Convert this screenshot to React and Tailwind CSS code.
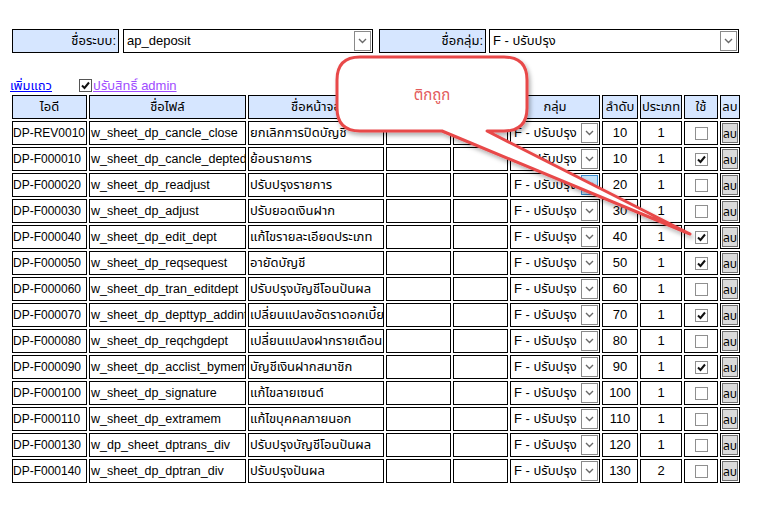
import React from "react";

const rows = [
  ["DP-REV0010", "w_sheet_dp_cancle_close", "ยกเลิกการปิดบัญชี", "10", "1", false],
  ["DP-F000010", "w_sheet_dp_cancle_deptedit", "ย้อนรายการ", "10", "1", true],
  ["DP-F000020", "w_sheet_dp_readjust", "ปรับปรุงรายการ", "20", "1", false],
  ["DP-F000030", "w_sheet_dp_adjust", "ปรับยอดเงินฝาก", "30", "1", false],
  ["DP-F000040", "w_sheet_dp_edit_dept", "แก้ไขรายละเอียดประเภท", "40", "1", true],
  ["DP-F000050", "w_sheet_dp_reqsequest", "อายัดบัญชี", "50", "1", true],
  ["DP-F000060", "w_sheet_dp_tran_editdept", "ปรับปรุงบัญชีโอนปันผล", "60", "1", false],
  ["DP-F000070", "w_sheet_dp_depttyp_addint", "เปลี่ยนแปลงอัตราดอกเบี้ย", "70", "1", true],
  ["DP-F000080", "w_sheet_dp_reqchgdept", "เปลี่ยนแปลงฝากรายเดือน", "80", "1", false],
  ["DP-F000090", "w_sheet_dp_acclist_bymember", "บัญชีเงินฝากสมาชิก", "90", "1", true],
  ["DP-F000100", "w_sheet_dp_signature", "แก้ไขลายเซนต์", "100", "1", false],
  ["DP-F000110", "w_sheet_dp_extramem", "แก้ไขบุคคลภายนอก", "110", "1", false],
  ["DP-F000130", "w_dp_sheet_dptrans_div", "ปรับปรุงบัญชีโอนปันผล", "120", "1", false],
  ["DP-F000140", "w_sheet_dp_dptran_div", "ปรับปรุงปันผล", "130", "2", false],
];

function Chevron() {
  return (
    <svg width="9" height="6" viewBox="0 0 9 6">
      <path d="M1 1 L4.5 4.5 L8 1" fill="none" stroke="#6a6a6a" strokeWidth="1.4" />
    </svg>
  );
}

function DropBtn({ hover }) {
  return (
    <div
      className={
        hover
          ? "m-px w-[17px] h-[20px] shrink-0 border border-[#3c8fd0] bg-[#c4e2f7] flex items-center justify-center"
          : "m-px w-[17px] h-[20px] shrink-0 border border-[#8a8a8a] bg-white flex items-center justify-center"
      }
    >
      <Chevron />
    </div>
  );
}

function Check({ checked, dark }) {
  return (
    <div
      className={
        dark
          ? "w-[13px] h-[13px] border border-[#555] bg-white flex items-center justify-center"
          : "w-[13px] h-[13px] border border-[#8f8f8f] bg-white flex items-center justify-center"
      }
    >
      {checked && (
        <svg width="11" height="11" viewBox="0 0 11 11">
          <path d="M2 5.5 L4.5 8 L9 2.5" fill="none" stroke="#111" strokeWidth="2" />
        </svg>
      )}
    </div>
  );
}

const cellTxt = "h-[22px] leading-[22px] overflow-hidden whitespace-nowrap";

export default function App() {
  return (
    <div className="relative w-[760px] h-[521px] bg-white overflow-hidden text-[13px] text-black font-['Liberation_Sans','Noto_Sans_Thai','Noto_Sans',sans-serif]">
      {/* top bar */}
      <div className="flex items-center pt-[29px] pl-[12px]">
        <div className="w-[107px] h-[24px] border border-black bg-[#d6e6ff] text-right pr-[2px] leading-[22px]">
          ชื่อระบบ:
        </div>
        <div className="ml-[4px] w-[250px] h-[24px] border border-black bg-white flex items-center">
          <div className="flex-1 pl-[3px] leading-[22px]">ap_deposit</div>
          <DropBtn />
        </div>
        <div className="ml-[6px] w-[107px] h-[24px] border border-black bg-[#d6e6ff] text-right pr-[2px] leading-[22px]">
          ชื่อกลุ่ม:
        </div>
        <div className="ml-[3px] w-[250px] h-[24px] border border-black bg-white flex items-center">
          <div className="flex-1 pl-[3px] leading-[22px]">F - ปรับปรุง</div>
          <DropBtn />
        </div>
      </div>

      {/* link row */}
      <div className="flex items-center h-[16px] mt-[25px] pl-[10px]">
        <span className="text-[#0000ff] underline">เพิ่มแถว</span>
        <div className="ml-[27px] -mt-[2px]">
          <Check checked dark />
        </div>
        <span className="ml-px text-[#a04cff] underline">ปรับสิทธิ์ admin</span>
      </div>

      {/* table */}
      <table className="ml-[10px] -mt-px border-separate border-spacing-[2px] table-fixed w-[732px]">
        <colgroup>
          <col className="w-[75px]" />
          <col className="w-[157px]" />
          <col className="w-[136px]" />
          <col className="w-[65px]" />
          <col className="w-[55px]" />
          <col className="w-[90px]" />
          <col className="w-[36px]" />
          <col className="w-[42px]" />
          <col className="w-[34px]" />
          <col className="w-[20px]" />
        </colgroup>
        <thead>
          <tr>
            {["ไอดี", "ชื่อไฟล์", "ชื่อหน้าจอ", "หน้าจอ", "สิทธิ์", "กลุ่ม", "ลำดับ", "ประเภท", "ใช้", "ลบ"].map((h, i) => (
              <th key={i} className="p-0 border border-black bg-[#d6e6ff] font-normal">
                <div className={cellTxt + " text-center"}>{h}</div>
              </th>
            ))}
          </tr>
        </thead>
        <tbody>
          {rows.map((r, i) => (
            <tr key={i}>
              <td className="p-0 border border-black">
                <div className={cellTxt + " text-[12px]"}>{r[0]}</div>
              </td>
              <td className="p-0 border border-black">
                <div className={cellTxt + " pl-px text-[12.5px]"}>{r[1]}</div>
              </td>
              <td className="p-0 border border-black">
                <div className={cellTxt + " pl-px"}>{r[2]}</div>
              </td>
              <td className="p-0 border border-black">
                <div className={cellTxt}></div>
              </td>
              <td className="p-0 border border-black">
                <div className={cellTxt}></div>
              </td>
              <td className="p-0 border border-black">
                <div className="h-[22px] flex items-center">
                  <div className="flex-1 pl-[3px] leading-[22px] overflow-hidden whitespace-nowrap">F - ปรับปรุง</div>
                  <DropBtn hover={i === 2} />
                </div>
              </td>
              <td className="p-0 border border-black">
                <div className={cellTxt + " text-center"}>{r[3]}</div>
              </td>
              <td className="p-0 border border-black">
                <div className={cellTxt + " text-center"}>{r[4]}</div>
              </td>
              <td className="p-0 border border-black">
                <div className="h-[22px] flex items-center justify-center">
                  <Check checked={r[5]} />
                </div>
              </td>
              <td className="p-0 border border-black">
                <div className="m-px h-[20px] border border-[#707070] bg-[#dadada] text-[12px] leading-[21px] text-center overflow-hidden">
                  ลบ
                </div>
              </td>
            </tr>
          ))}
        </tbody>
      </table>

      {/* callout */}
      <svg className="absolute left-0 top-0 pointer-events-none" width="760" height="521" viewBox="0 0 760 521">
        <defs>
          <filter id="sh" x="-20%" y="-20%" width="140%" height="140%">
            <feDropShadow dx="2" dy="3" stdDeviation="2" floodColor="#000" floodOpacity="0.3" />
          </filter>
        </defs>
        <path
          d="M360 57 H504 Q527 57 527 80 V108 Q527 131 504 131 H487 L690 234 L442 131 H360 Q337 131 337 108 V80 Q337 57 360 57 Z"
          fill="#fff"
          stroke="#e8484a"
          strokeWidth="3"
          strokeLinejoin="round"
          filter="url(#sh)"
        />
      </svg>
      <div className="absolute left-[337px] top-[84px] w-[190px] text-center text-[15px] text-[#e35a5a] pointer-events-none">
        ติกถูก
      </div>
    </div>
  );
}
